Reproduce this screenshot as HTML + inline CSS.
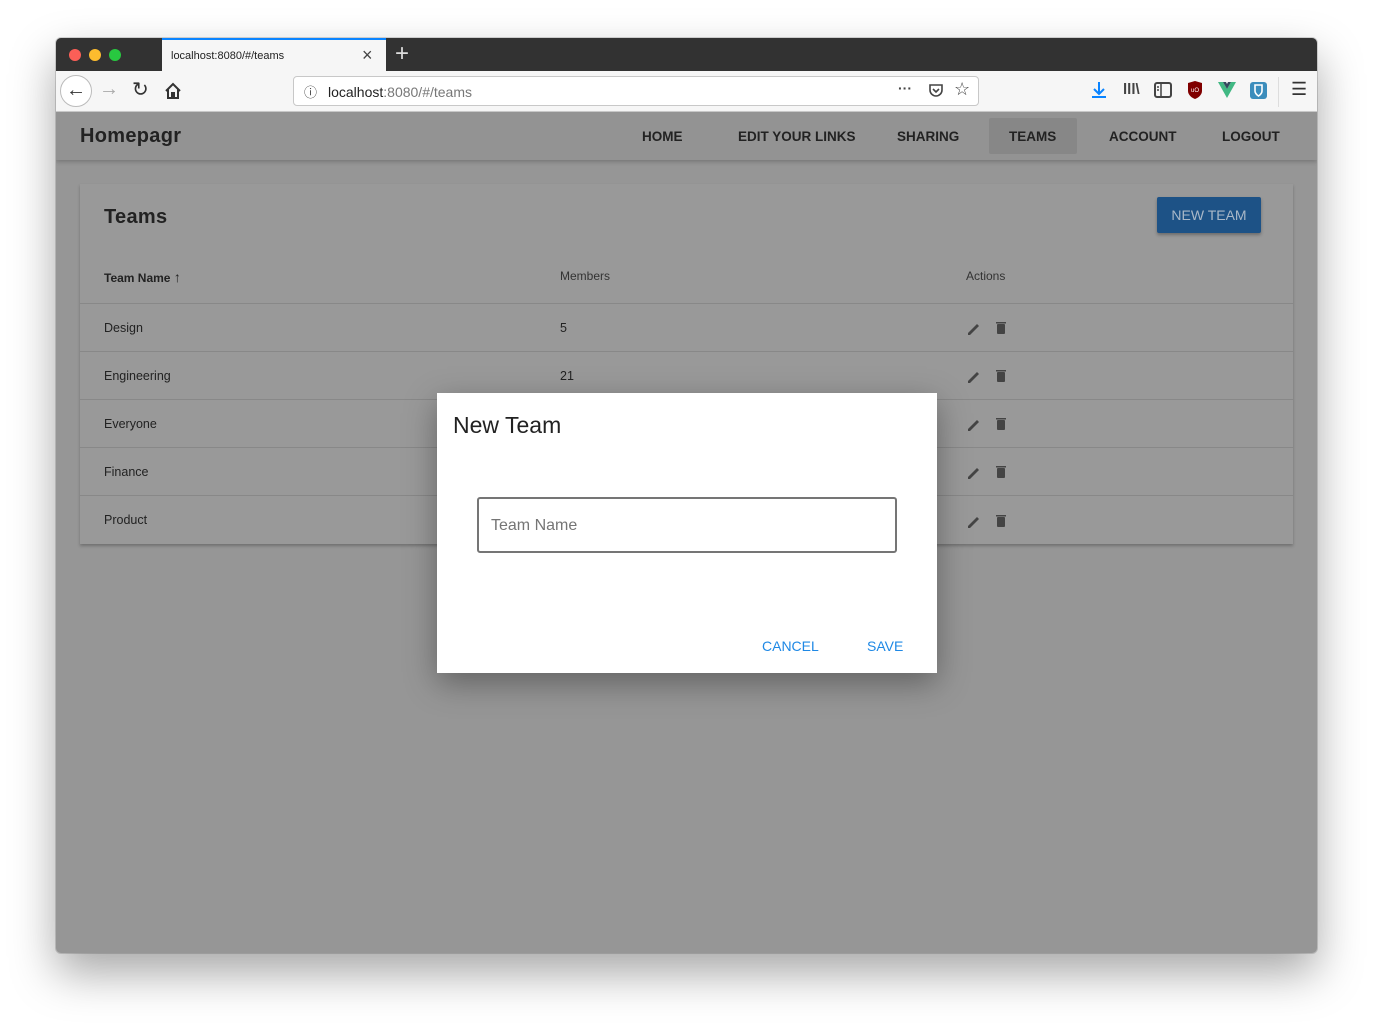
<!DOCTYPE html>
<html><head><meta charset="utf-8"><style>
*{box-sizing:border-box;margin:0;padding:0}
body{width:1373px;height:1027px;background:#fff;font-family:"Liberation Sans",sans-serif;position:relative;overflow:hidden}
.win{position:absolute;left:56px;top:38px;width:1261px;height:915px;border-radius:5px;overflow:hidden;box-shadow:0 20px 45px rgba(0,0,0,.35),0 0 0 1px rgba(0,0,0,.15);background:#969696}
.tabbar{position:absolute;left:0;top:0;width:100%;height:33px;background:#323232}
.dot{position:absolute;top:11px;width:12px;height:12px;border-radius:50%}
.tab{position:absolute;left:106px;top:0;width:224px;height:33px;background:#f6f6f6;border-top:2px solid #0a84ff}
.tab span{position:absolute;left:9px;top:10px;font-size:11px;color:#222}
.nav{position:absolute;left:0;top:33px;width:100%;height:41px;background:#f6f6f6;border-bottom:1px solid #ccc}
.url{position:absolute;left:237px;top:5px;width:686px;height:30px;background:#fff;border:1px solid #c8c8c8;border-radius:4px}
.url span{position:absolute;left:34px;top:7px;font-size:14px;color:#222}
.app{position:absolute;left:0;top:74px;width:100%;height:48px;background:#939393;box-shadow:0 2px 4px rgba(0,0,0,.2)}
.brand{position:absolute;left:24px;top:13px;font-size:20px;color:#222;font-weight:bold;letter-spacing:.3px}
.menu{position:absolute;top:17px;font-size:13.5px;color:#222;font-weight:bold;letter-spacing:0}
.card{position:absolute;left:24px;top:146px;width:1213px;height:360px;background:#999;box-shadow:0 2px 3px rgba(0,0,0,.25)}
.row{position:absolute;left:0;width:100%;border-top:1px solid #888;font-size:12.5px;color:#222}
.row span{position:absolute;top:17px}
.dlg{position:absolute;left:381px;top:355px;width:500px;height:280px;background:#fff;box-shadow:0 10px 30px rgba(0,0,0,.35)}
</style></head><body>
<div class="win">
 <div class="tabbar">
  <div class="dot" style="left:13px;background:#fc5f57"></div>
  <div class="dot" style="left:33px;background:#fdbc2e"></div>
  <div class="dot" style="left:53px;background:#28c840"></div>
  <div class="tab"><span>localhost:8080/#/teams</span><span style="left:200px;top:5px;font-size:18px;color:#444">×</span></div>
  <div style="position:absolute;left:339px;top:2px;color:#ddd;font-size:24px">+</div>
 </div>
 <div class="nav">
  <div style="position:absolute;left:4px;top:4px;width:32px;height:32px;border:1px solid #bbb;border-radius:50%;background:#fff;text-align:center;font-size:20px;line-height:28px;color:#333">←</div>
  <div style="position:absolute;left:43px;top:7px;font-size:20px;color:#aaa">→</div>
  <div style="position:absolute;left:76px;top:6px;font-size:20px;color:#333">↻</div>
  <svg style="position:absolute;left:108px;top:11px" width="18" height="18" viewBox="0 0 18 18"><path d="M2 9L9 2l7 7M4 7v9h4v-5h2v5h4V7" fill="none" stroke="#333" stroke-width="2"/></svg>
  <div class="url"><span style="left:10px;top:5px;font-size:13px;color:#444">ⓘ</span><span>localhost<span style="position:static;color:#777">:8080/#/teams</span></span>
   <span style="left:604px;top:3px;font-weight:bold;color:#444">···</span>
   <svg style="position:absolute;left:634px;top:6px" width="16" height="16"><path d="M2 2h12v5a6 6 0 0 1-12 0z M5 6l3 3 3-3" fill="none" stroke="#444" stroke-width="1.6"/></svg>
   <span style="left:660px;top:2px;font-size:18px;color:#444">☆</span>
  </div>
  <svg style="position:absolute;left:1035px;top:10px" width="16" height="18"><path d="M8 1v12M3 8l5 5 5-5M1 16h14" fill="none" stroke="#0a84ff" stroke-width="2"/></svg>
  <div style="position:absolute;left:1067px;top:10px;font-size:15px;color:#444;font-weight:bold">lll\</div>
  <svg style="position:absolute;left:1098px;top:11px" width="18" height="16"><rect x="1" y="1" width="16" height="14" rx="2" fill="none" stroke="#444" stroke-width="2"/><path d="M7 1v14M3 5h2M3 8h2" stroke="#444" stroke-width="1.5"/></svg>
  <svg style="position:absolute;left:1131px;top:10px" width="16" height="18"><path d="M1 2l7-2 7 2v8c0 4-4 7-7 8-3-1-7-4-7-8z" fill="#800000"/><text x="8" y="11" font-size="6" fill="#fff" text-anchor="middle" font-family="Liberation Sans">uO</text></svg>
  <svg style="position:absolute;left:1162px;top:11px" width="18" height="16"><path d="M0 0h5l4 7 4-7h5L9 16z" fill="#41b883"/><path d="M5 0h3l1 2 1-2h3L9 7z" fill="#34495e"/></svg>
  <svg style="position:absolute;left:1194px;top:11px" width="17" height="17"><rect width="17" height="17" rx="3" fill="#3c8dbc"/><path d="M5 3h7v6c0 2-2 4-3.5 5C7 13 5 11 5 9z" fill="none" stroke="#fff" stroke-width="1.6"/></svg>
  <div style="position:absolute;left:1222px;top:6px;width:1px;height:30px;background:#ddd"></div>
  <div style="position:absolute;left:1235px;top:8px;font-size:18px;color:#333">☰</div>
 </div>
 <div class="app">
  <div class="brand">Homepagr</div>
  <div class="menu" style="left:586px">HOME</div>
  <div class="menu" style="left:682px">EDIT YOUR LINKS</div>
  <div class="menu" style="left:841px">SHARING</div>
  <div style="position:absolute;left:933px;top:6px;width:88px;height:36px;background:#878787;border-radius:2px"></div>
  <div class="menu" style="left:953px">TEAMS</div>
  <div class="menu" style="left:1053px">ACCOUNT</div>
  <div class="menu" style="left:1166px">LOGOUT</div>
 </div>
 <div class="card">
  <div style="position:absolute;left:24px;top:22px;font-size:20px;color:#222;font-weight:bold;letter-spacing:.3px">Teams</div>
  <div style="position:absolute;left:1077px;top:13px;width:104px;height:36px;background:#1d5286;border-radius:2px;box-shadow:0 2px 3px rgba(0,0,0,.3);color:#a9b8c8;font-size:14px;text-align:center;line-height:36px">NEW TEAM</div>
  <div style="position:absolute;left:24px;top:85px;font-size:12px;color:#222;font-weight:bold">Team Name <span style="font-size:14px;font-weight:normal">↑</span></div>
  <div style="position:absolute;left:480px;top:85px;font-size:12px;color:#333">Members</div>
  <div style="position:absolute;left:886px;top:85px;font-size:12px;color:#333">Actions</div>
  <div class="row" style="top:119px;height:48px"><span style="left:24px">Design</span><span style="left:480px">5</span></div>
  <div class="row" style="top:167px;height:48px"><span style="left:24px">Engineering</span><span style="left:480px">21</span></div>
  <div class="row" style="top:215px;height:48px"><span style="left:24px">Everyone</span></div>
  <div class="row" style="top:263px;height:48px"><span style="left:24px">Finance</span></div>
  <div class="row" style="top:311px;height:49px"><span style="left:24px">Product</span></div>
 </div>
 <svg style="position:absolute;left:0;top:0" width="1261" height="915">
  <defs><g id="ic"><path d="M0 11l9-9 2 2-9 9H0z"/><rect x="29" y="2" width="8" height="10" rx="1"/><rect x="28" y="0" width="10" height="1.5"/></g></defs>
  <g fill="#444">
   <use href="#ic" x="912" y="284"/>
   <use href="#ic" x="912" y="332"/>
   <use href="#ic" x="912" y="380"/>
   <use href="#ic" x="912" y="428"/>
   <use href="#ic" x="912" y="477"/>
  </g>
 </svg>
 <div class="dlg">
  <div style="position:absolute;left:16px;top:19px;font-size:23px;color:#222">New Team</div>
  <div style="position:absolute;left:40px;top:104px;width:420px;height:56px;border:2px solid #757575;border-radius:3px"><span style="position:absolute;left:12px;top:18px;font-size:16px;color:#757575">Team Name</span></div>
  <div style="position:absolute;left:325px;top:245px;font-size:14px;color:#1e88e5">CANCEL</div>
  <div style="position:absolute;left:430px;top:245px;font-size:14px;color:#1e88e5">SAVE</div>
 </div>
</div>
</body></html>
